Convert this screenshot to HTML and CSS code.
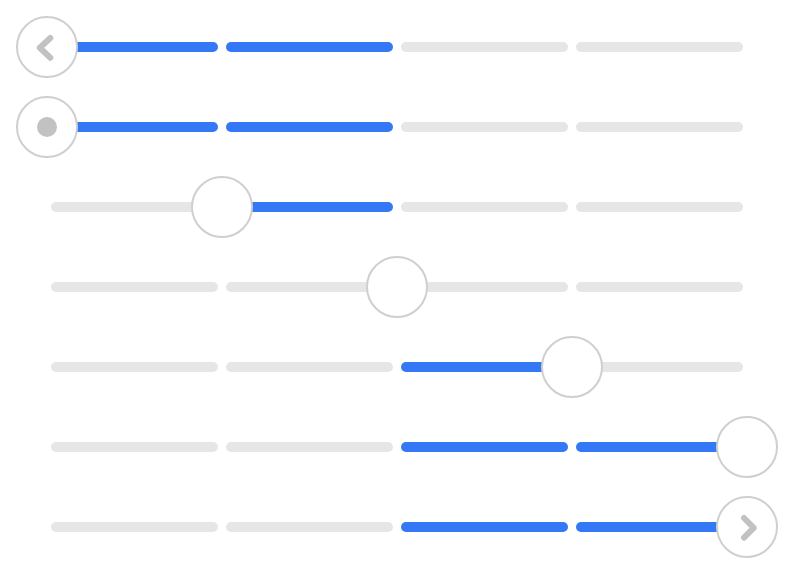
FILE: index.html
```html
<!DOCTYPE html>
<html>
<head>
<meta charset="utf-8">
<link rel="stylesheet" href="styles.css">
</head>
<body>
<div class="list">
  <div class="row">
    <div class="track"><div class="seg on"></div><div class="seg on"></div><div class="seg"></div><div class="seg"></div></div>
    <div class="knob k0"><svg width="58" height="58" viewBox="0 0 58 58"><path d="M32.3 20 L21.8 29.8 L32.3 39.7" fill="none" stroke="#c2c2c2" stroke-width="6" stroke-linecap="round" stroke-linejoin="round"/></svg></div>
  </div>
  <div class="row">
    <div class="track"><div class="seg on"></div><div class="seg on"></div><div class="seg"></div><div class="seg"></div></div>
    <div class="knob k0"><span class="dot"></span></div>
  </div>
  <div class="row">
    <div class="track"><div class="seg"></div><div class="seg on"></div><div class="seg"></div><div class="seg"></div></div>
    <div class="knob k1"></div>
  </div>
  <div class="row">
    <div class="track"><div class="seg"></div><div class="seg"></div><div class="seg"></div><div class="seg"></div></div>
    <div class="knob k2"></div>
  </div>
  <div class="row">
    <div class="track"><div class="seg"></div><div class="seg"></div><div class="seg on"></div><div class="seg"></div></div>
    <div class="knob k3"></div>
  </div>
  <div class="row">
    <div class="track"><div class="seg"></div><div class="seg"></div><div class="seg on"></div><div class="seg on"></div></div>
    <div class="knob k4"></div>
  </div>
  <div class="row">
    <div class="track"><div class="seg"></div><div class="seg"></div><div class="seg on"></div><div class="seg on"></div></div>
    <div class="knob k4"><svg width="58" height="58" viewBox="0 0 58 58"><path d="M26 20 L35.7 29.8 L26 39.7" fill="none" stroke="#c2c2c2" stroke-width="6" stroke-linecap="round" stroke-linejoin="round"/></svg></div>
  </div>
</div>
</body>
</html>
```

FILE: styles.css
```css
html, body {
  margin: 0;
  padding: 0;
  background: #ffffff;
  font-family: "Liberation Sans", Arial, sans-serif;
}
.list {
  padding-top: 7px;
  display: flex;
  flex-direction: column;
}
.row {
  position: relative;
  height: 80px;
  display: flex;
  align-items: center;
  padding-left: 51px;
}
.track {
  display: flex;
  gap: 8px;
}
.seg {
  width: 167px;
  height: 10px;
  border-radius: 5px;
  background: #e6e6e6;
}
.seg.on {
  background: #3478f6;
}
.knob {
  position: absolute;
  top: 9px;
  width: 62px;
  height: 62px;
  box-sizing: border-box;
  border: 2px solid #cfcfcf;
  border-radius: 50%;
  background: #ffffff;
  display: flex;
  align-items: center;
  justify-content: center;
}
.knob svg {
  display: block;
}
.k0 { left: 16px; }
.k1 { left: 191px; }
.k2 { left: 366px; }
.k3 { left: 541px; }
.k4 { left: 716px; }
.dot {
  width: 20px;
  height: 20px;
  border-radius: 50%;
  background: #c2c2c2;
  margin-left: -1px;
}
```
